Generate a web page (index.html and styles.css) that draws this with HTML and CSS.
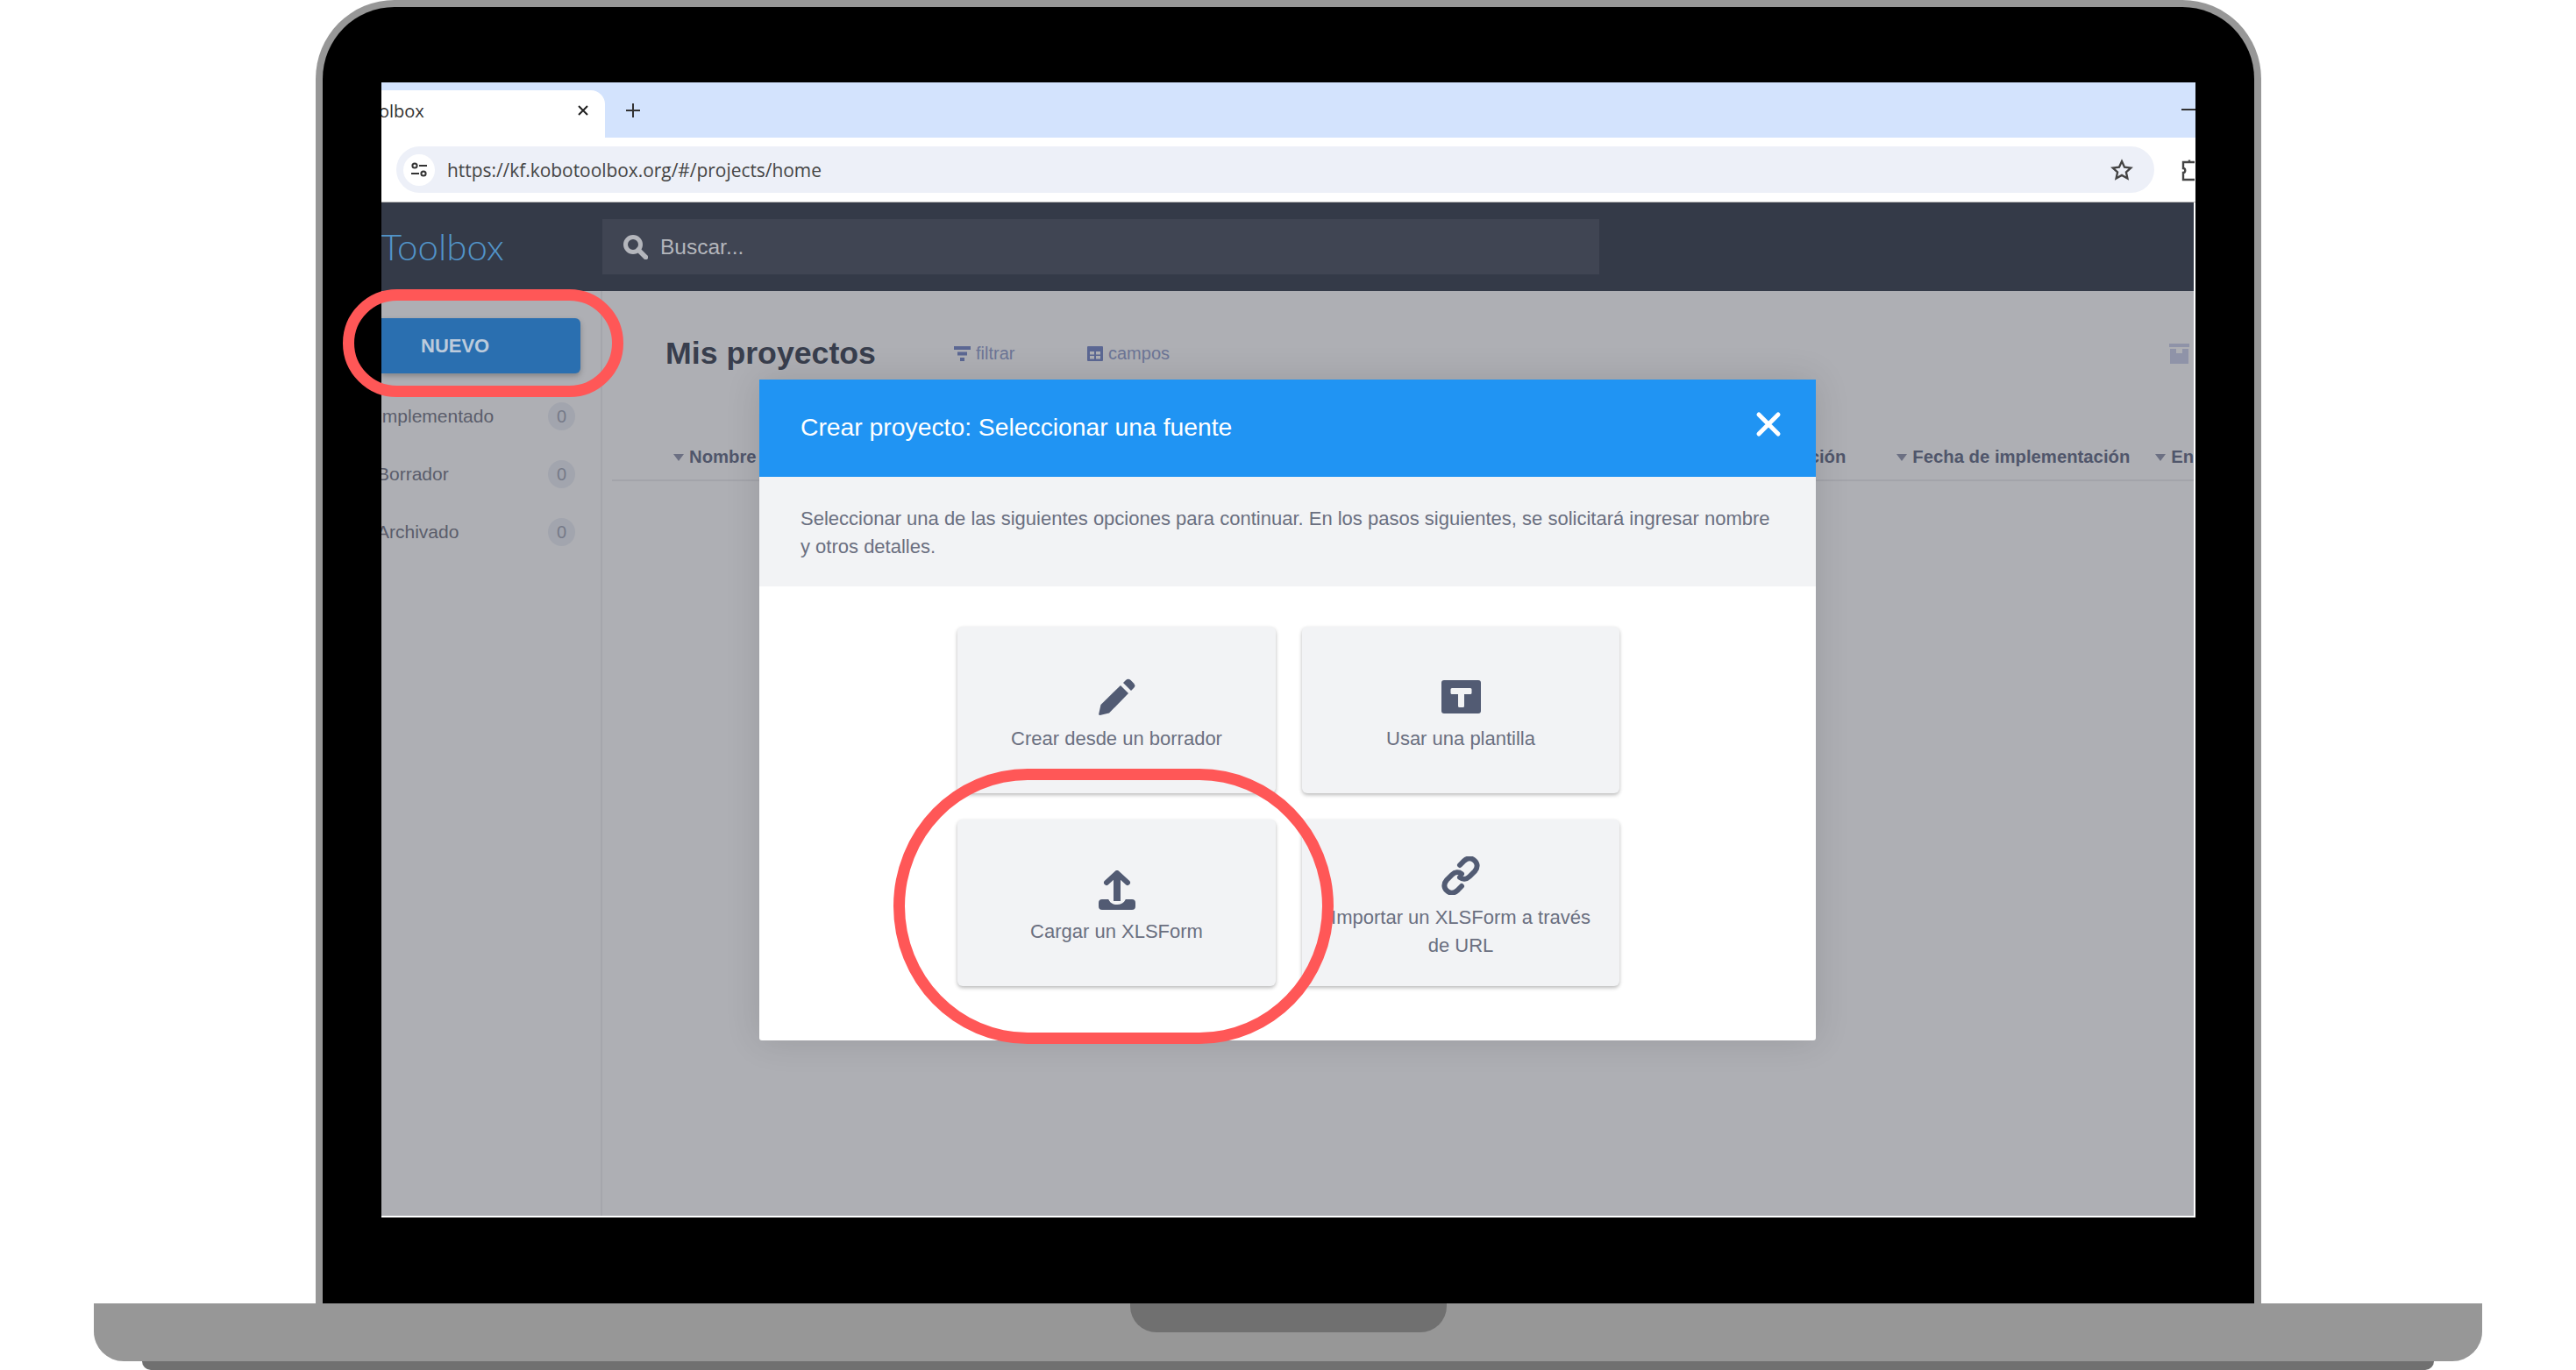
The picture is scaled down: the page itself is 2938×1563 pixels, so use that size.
FILE: index.html
```html
<!DOCTYPE html>
<html lang="es">
    <head>
        <meta charset="UTF-8" />
        <meta name="viewport" content="width=device-width, initial-scale=1.0" />
        <title>Crear proyecto</title>
        <link rel="stylesheet" href="styles.css">
    </head>
    <body>
        <div class="laptop">
            <div class="lid">
                <div class="screen">
                    <div class="tabstrip">
                        <div class="tab">
                            <span class="tab-title">olbox</span>
                            <svg class="tab-close" width="14" height="14" viewBox="0 0 14 14"><path d="M2 2l10 10M12 2L2 12" stroke="#222" stroke-width="2"/></svg>
                        </div>
                        <svg class="tab-new" width="20" height="20" viewBox="0 0 20 20"><path d="M10 2v16M2 10h16" stroke="#333" stroke-width="2"/></svg>
                        <div class="minimize"></div>
                    </div>
                    <div class="toolbar">
                        <div class="omnibox">
                            <div class="site-icon">
                                <svg width="20" height="20" viewBox="0 0 20 20" fill="none" stroke="#333" stroke-width="2"><circle cx="5" cy="5" r="2.6"/><path d="M10 5h9M1 14h9"/><circle cx="15" cy="14" r="2.6"/></svg>
                            </div>
                            <span class="url">https://kf.kobotoolbox.org/#/projects/home</span>
                            <svg class="star" width="28" height="28" viewBox="0 0 24 24" fill="none" stroke="#444" stroke-width="2"><path d="M12 3.500l2.600 5.700 6.200.7-4.600 4.200 1.300 6.100-5.500-3.100-5.500 3.100 1.300-6.100-4.600-4.200 6.200-.7z"/></svg>
                        </div>
                        <svg class="puzzle" width="16" height="28" viewBox="0 0 16 28" fill="none" stroke="#444" stroke-width="2.400"><path d="M16 5H10V2.500M10 5H3v7c3 0 3 5 0 5v8h13"/></svg>
                    </div>
                    <div class="app">
                        <div class="appbar">
                            <div class="logo">Toolbox</div>
                            <div class="search">
                                <svg width="29" height="29" viewBox="0 0 29 29" fill="none" stroke="#b4b6bc"><circle cx="12" cy="12" r="8.500" stroke-width="5"/><path d="M18 18l8.500 8.500" stroke-width="5.500" stroke-linecap="round"/></svg>
                                <span>Buscar...</span>
                            </div>
                        </div>
                        <div class="main">
                            <div class="sidebar">
                                <div class="btn-new">NUEVO</div>
                                <div class="side-item"><span>Implementado</span><span class="badge">0</span></div>
                                <div class="side-item"><span>Borrador</span><span class="badge">0</span></div>
                                <div class="side-item"><span>Archivado</span><span class="badge">0</span></div>
                            </div>
                            <div class="content">
                                <div class="content-head">
                                    <h1>Mis proyectos</h1>
                                    <span class="head-link link-filter">
                                        <svg width="19" height="17" viewBox="0 0 19 17" fill="#5b6793"><path d="M0 0h19v4H0zM4 6.500h11v4H4zM7 13h5v4H7z"/></svg>
                                        filtrar
                                    </span>
                                    <span class="head-link link-fields">
                                        <svg width="18" height="17" viewBox="0 0 18 17" fill="#5b6793"><path d="M1 0h16a1 1 0 0 1 1 1v15a1 1 0 0 1-1 1H1a1 1 0 0 1-1-1V1a1 1 0 0 1 1-1zM3 6v3.500h5V6zM10 6v3.500h5V6zM3 11v3.500h5V11zM10 11v3.500h5V11z" fill-rule="evenodd"/></svg>
                                        campos
                                    </span>
                                    <svg class="archive" width="23" height="23" viewBox="0 0 23 23" fill="#8f93a8"><path d="M0 0h23v4H0zM1 6h21v17H1zM8 6v5h7V6z" fill-rule="evenodd"/></svg>
                                </div>
                                <div class="table-head">
                                    <span class="col col-name">Nombre</span>
                                    <span class="col col-status">ción</span>
                                    <span class="col col-date">Fecha de implementación</span>
                                    <span class="col col-last">Enviados</span>
                                </div>
                            </div>
                        </div>
                    </div>
                </div>
            </div>
            <div class="base"><div class="notch"></div></div>
            <div class="foot"></div>

            <div class="modal">
                <div class="modal-title">
                    <span>Crear proyecto: Seleccionar una fuente</span>
                    <svg width="30" height="30" viewBox="0 0 30 30"><path d="M4 4l22 22M26 4L4 26" stroke="#fff" stroke-width="5" stroke-linecap="round"/></svg>
                </div>
                <div class="modal-desc">Seleccionar una de las siguientes opciones para continuar. En los pasos siguientes, se solicitará ingresar nombre y otros detalles.</div>
                <div class="modal-body">
                    <div class="card">
                        <div class="card-icon">
                            <svg width="42" height="42" viewBox="0 0 42 42" fill="#525b73"><path d="M1.500 42c-1 0-1.500-.6-1.300-1.600L2.500 30 25 8l9 9-22 22.500z"/><path d="M28 5l3-3a4 4 0 0 1 5.600 0l3.400 3.400a4 4 0 0 1 0 5.600l-3 3z"/></svg>
                        </div>
                        <span>Crear desde un borrador</span>
                    </div>
                    <div class="card">
                        <div class="card-icon">
                            <svg width="45" height="38" viewBox="0 0 45 38"><rect width="45" height="38" rx="3" fill="#525b73"/><path d="M12 9h21a1.500 1.500 0 0 1 1.500 1.500v4a1.500 1.500 0 0 1-1.500 1.500h-7v13.500a1.500 1.500 0 0 1-1.500 1.500h-4a1.500 1.500 0 0 1-1.500-1.500V16h-7a1.500 1.500 0 0 1-1.500-1.500v-4A1.500 1.500 0 0 1 12 9z" fill="#f2f3f5"/></svg>
                        </div>
                        <span>Usar una plantilla</span>
                    </div>
                    <div class="card">
                        <div class="card-icon">
                            <svg width="42" height="45" viewBox="0 0 42 45" fill="#525b73"><path d="M9 14L21 3l12 11" fill="none" stroke="#525b73" stroke-width="6" stroke-linecap="round" stroke-linejoin="round"/><path d="M17 6h8v29h-8z"/><path d="M4 33h7c1 0 1.500 6 10 6s9-6 10-6h7q4 0 4 4v4q0 4-4 4H4q-4 0-4-4v-4q0-4 4-4z"/></svg>
                        </div>
                        <span>Cargar un XLSForm</span>
                    </div>
                    <div class="card card-tall">
                        <div class="card-icon">
                            <svg width="44" height="44" viewBox="0 0 44 44" fill="none" stroke="#525b73" stroke-width="6" stroke-linecap="round"><path d="M21 10l5-5c4-3.500 8.500-3.500 12 0s3.500 8 0 12l-6 6c-3.500 3.500-8 3.500-11 1"/><path d="M23 34l-5 5c-4 3.500-8.500 3.500-12 0s-3.500-8 0-12l6-6c3.500-3.500 8-3.500 11-1"/></svg>
                        </div>
                        <span>Importar un XLSForm a través de URL</span>
                    </div>
                </div>
            </div>

            <div class="ring ring-new"></div>
            <div class="ring ring-upload"></div>
        </div>
    </body>
</html>
```

FILE: styles.css
```css
* {
    box-sizing: border-box;
}

body {
    margin: 0;
    background-color: #fff;
    font-family: "Liberation Sans", Arial, sans-serif;
    overflow: hidden;
}

.laptop {
    position: relative;
    width: 2938px;
    height: 1563px;
    display: flex;
    flex-direction: column;
    align-items: center;
}

.lid {
    width: 2219px;
    height: 1487px;
    margin-left: 1px;
    padding: 86px 66px 0 67px;
    background-color: #000;
    border: 8px solid #979797;
    border-bottom: 0;
    border-radius: 90px 90px 0 0;
}

.screen {
    width: 2069px;
    height: 1295px;
    display: flex;
    flex-direction: column;
    background-color: #fff;
    overflow: hidden;
}

.base {
    width: 2724px;
    height: 66px;
    display: flex;
    justify-content: center;
    background-color: #979797;
    border-radius: 0 0 34px 34px;
}

.notch {
    width: 361px;
    height: 33px;
    background-color: #707070;
    border-radius: 0 0 30px 30px;
}

.foot {
    width: 2614px;
    height: 10px;
    background-color: #707070;
    border-radius: 0 0 14px 14px;
}

/* browser */
.tabstrip {
    height: 63px;
    flex: none;
    display: flex;
    align-items: flex-end;
    position: relative;
    background-color: #d3e3fd;
}

.tab {
    width: 255px;
    height: 54px;
    display: flex;
    align-items: center;
    justify-content: space-between;
    padding: 0 18px 8px 0;
    background-color: #fff;
    border-radius: 0 16px 0 0;
    font-family: "Open Sans", sans-serif;
    font-size: 20px;
    color: #333;
}

.tab-title {
    margin-left: -3px;
}

.tab-new {
    margin: 0 0 21px 22px;
}

.minimize {
    width: 16px;
    height: 2px;
    margin: 0 0 31px auto;
    background-color: #333;
}

.toolbar {
    height: 74px;
    flex: none;
    display: flex;
    align-items: center;
    justify-content: space-between;
    padding-left: 17px;
    border-bottom: 1px solid #bbb;
}

.omnibox {
    width: 2005px;
    height: 53px;
    display: flex;
    align-items: center;
    padding: 0 23px 0 8px;
    background-color: #edf0f8;
    border-radius: 27px;
}

.site-icon {
    width: 36px;
    height: 36px;
    margin-right: 14px;
    display: flex;
    align-items: center;
    justify-content: center;
    background-color: #fff;
    border-radius: 50%;
}

.url {
    flex: 1;
    font-family: "Open Sans", sans-serif;
    font-size: 20.900px;
    color: #444;
}

.puzzle {
    margin-right: 1px;
}

/* kobo app */
.app {
    flex: 1;
    min-height: 0;
    margin: 0 2px 2px 0;
    display: flex;
    flex-direction: column;
    background-color: #aeafb4;
}

.appbar {
    height: 101px;
    flex: none;
    display: flex;
    align-items: center;
    background-color: #343a48;
}

.logo {
    width: 252px;
    flex: none;
    padding-bottom: 1px;
    text-indent: -1px;
    font-family: Lato, sans-serif;
    font-weight: 300;
    font-size: 42px;
    color: #5294c8;
}

.search {
    width: 1137px;
    height: 63px;
    display: flex;
    align-items: center;
    gap: 14px;
    padding-left: 23px;
    background-color: #404553;
    font-size: 24.500px;
    color: #b4b6bc;
}

.main {
    flex: 1;
    min-height: 0;
    display: flex;
}

.sidebar {
    width: 252px;
    flex: none;
    padding-top: 31px;
    border-right: 2px solid #a5a6ac;
}

.btn-new {
    width: 227px;
    height: 63px;
    margin-bottom: 16px;
    padding-left: 45px;
    display: flex;
    align-items: center;
    background-color: #2a6fb0;
    border-radius: 0 6px 6px 0;
    box-shadow: 0 3px 6px rgba(0, 0, 0, 0.25);
    font-weight: 700;
    font-size: 22px;
    color: #bccbdc;
}

.side-item {
    height: 66px;
    display: flex;
    align-items: center;
    justify-content: space-between;
    padding-right: 29px;
    font-size: 21px;
    color: #5a5d6b;
}

.side-item span:first-child {
    margin-left: -5px;
}

.badge {
    width: 31px;
    height: 32px;
    display: flex;
    align-items: center;
    justify-content: center;
    background-color: #a2a5ae;
    border-radius: 50%;
    font-size: 20px;
    color: #767a88;
}

.content {
    flex: 1;
    min-width: 0;
    overflow: hidden;
}

.content-head {
    height: 97px;
    display: flex;
    align-items: center;
    padding-top: 46px;
    padding-right: 5px;
}

h1 {
    width: 329px;
    margin: 0 0 0 72px;
    font-size: 35.700px;
    white-space: nowrap;
    color: #383e4d;
}

.head-link {
    display: flex;
    align-items: center;
    gap: 6px;
    font-size: 20px;
    color: #6c7596;
}

.link-filter {
    width: 152px;
}

.archive {
    margin-left: auto;
}

.table-head {
    height: 120px;
    margin-left: 11px;
    display: flex;
    align-items: center;
    padding-top: 66px;
    border-bottom: 2px solid #a3a4aa;
    font-weight: 700;
    font-size: 20.300px;
    color: #50566b;
    white-space: nowrap;
}

.col {
    position: relative;
}

.col::before {
    content: "";
    position: absolute;
    left: -18px;
    top: 8px;
    border: 6px solid transparent;
    border-top: 8px solid #6c7083;
    border-bottom: 0;
}

.col-name {
    margin-left: 88px;
}

.col-status {
    margin-left: 1201px;
}

.col-status::before {
    display: none;
}

.col-date {
    margin-left: 76px;
}

.col-last {
    margin-left: 47px;
}

/* overlay */
.modal {
    position: absolute;
    left: 866px;
    top: 433px;
    width: 1205px;
    height: 754px;
    display: flex;
    flex-direction: column;
    background-color: #fff;
    border-radius: 3px;
    box-shadow: 0 0 40px rgba(0, 0, 0, 0.12);
}

.modal-title {
    height: 111px;
    flex: none;
    display: flex;
    align-items: center;
    justify-content: space-between;
    padding: 0 39px 2px 47px;
    background-color: #2094f3;
    font-size: 28.300px;
    color: #fff;
}

.modal-title svg {
    margin-bottom: 8px;
}

.modal-desc {
    height: 125px;
    flex: none;
    padding: 32px 47px 0;
    background-color: #f2f3f5;
    font-size: 22px;
    line-height: 32px;
    color: #6a6f80;
}

.modal-body {
    display: grid;
    grid-template-columns: 363px 362px;
    grid-auto-rows: 190px;
    gap: 30px;
    padding: 46px 0 0 226px;
}

.card {
    display: flex;
    flex-direction: column;
    align-items: center;
    padding: 58px 30px 0;
    background-color: #f2f3f5;
    border-radius: 6px;
    box-shadow: 0 2px 4px rgba(0, 0, 0, 0.28);
    font-size: 22px;
    line-height: 32px;
    text-align: center;
    color: #6a6f80;
}

.card-icon {
    height: 44px;
    margin-bottom: 10px;
    display: flex;
    align-items: center;
}

.card-tall {
    padding-top: 42px;
}

.ring {
    position: absolute;
    border: 13px solid #ff5757;
}

.ring-new {
    left: 391px;
    top: 330px;
    width: 320px;
    height: 123px;
    border-radius: 62px;
}

.ring-upload {
    left: 1019px;
    top: 877px;
    width: 502px;
    height: 314px;
    border-radius: 153px / 157px;
}
```
